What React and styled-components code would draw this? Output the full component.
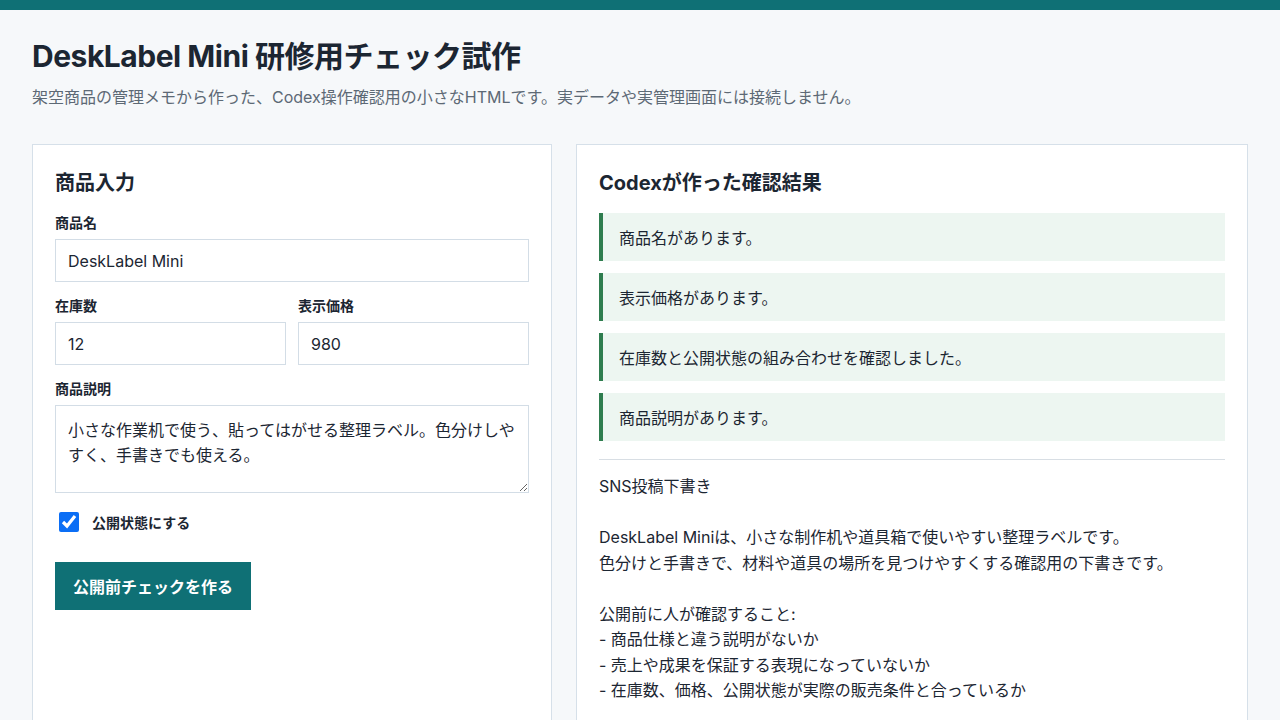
import styled, { createGlobalStyle } from "styled-components"

const draft = `SNS投稿下書き

DeskLabel Miniは、小さな制作机や道具箱で使いやすい整理ラベルです。
色分けと手書きで、材料や道具の場所を見つけやすくする確認用の下書きです。

公開前に人が確認すること:
- 商品仕様と違う説明がないか
- 売上や成果を保証する表現になっていないか
- 在庫数、価格、公開状態が実際の販売条件と合っているか`

const checks = [
  "商品名があります。",
  "表示価格があります。",
  "在庫数と公開状態の組み合わせを確認しました。",
  "商品説明があります。",
]

export default function App() {
  return (
    <>
      <GlobalStyle />
      <TopBar />
      <Page>
        <Title>DeskLabel Mini 研修用チェック試作</Title>
        <Lead>架空商品の管理メモから作った、Codex操作確認用の小さなHTMLです。実データや実管理画面には接続しません。</Lead>

        <Columns>
          <Panel>
            <PanelTitle>商品入力</PanelTitle>

            <Field>
              <Label>商品名</Label>
              <Input defaultValue="DeskLabel Mini" />
            </Field>

            <Row>
              <Field>
                <Label>在庫数</Label>
                <Input defaultValue="12" />
              </Field>
              <Field>
                <Label>表示価格</Label>
                <Input defaultValue="980" />
              </Field>
            </Row>

            <Field>
              <Label>商品説明</Label>
              <TextArea defaultValue="小さな作業机で使う、貼ってはがせる整理ラベル。色分けしやすく、手書きでも使える。" />
            </Field>

            <CheckRow>
              <input type="checkbox" defaultChecked />
              <span>公開状態にする</span>
            </CheckRow>

            <Button>公開前チェックを作る</Button>
          </Panel>

          <Panel>
            <PanelTitle>Codexが作った確認結果</PanelTitle>
            <ResultList>
              {checks.map((c) => (
                <ResultItem key={c}>{c}</ResultItem>
              ))}
            </ResultList>
            <Divider />
            <Draft>{draft}</Draft>
          </Panel>
        </Columns>
      </Page>
    </>
  )
}

const GlobalStyle = createGlobalStyle`
  body {
    margin: 0;
    background: #f6f8fa;
    color: #1c2632;
    font-family: Inter, "Noto Sans CJK JP", sans-serif;
  }
`
const TopBar = styled.div`
  height: 10px;
  background: #0f7075;
`
const Page = styled.main`
  padding: 28px 32px 40px;
`
const Title = styled.h1`
  margin: 0;
  font-size: 30px;
  line-height: 36px;
  font-weight: 700;
  letter-spacing: -0.016em;
`
const Lead = styled.p`
  margin: 12px 0 0;
  font-size: 16px;
  line-height: 22px;
  color: #5d6975;
`
const Columns = styled.div`
  display: grid;
  grid-template-columns: 520px 1fr;
  gap: 24px;
  margin-top: 36px;
`
const Panel = styled.section`
  background: #fff;
  border: 1px solid #d6e0e9;
  padding: 24px 22px 40px;
  min-height: 600px;
`
const PanelTitle = styled.h2`
  margin: 0 0 16px;
  font-size: 20px;
  line-height: 28px;
  font-weight: 700;
`
const Field = styled.div`
  display: flex;
  flex-direction: column;
  gap: 7px;
  margin-bottom: 14px;
  min-width: 0;
`
const Label = styled.label`
  font-size: 14px;
  line-height: 19px;
  font-weight: 700;
`
const Input = styled.input`
  box-sizing: border-box;
  width: 100%;
  height: 43px;
  padding: 0 12px;
  border: 1px solid #d3dde6;
  border-radius: 0;
  font: inherit;
  font-size: 16px;
  color: #1c2632;
  background: #fff;
`
const Row = styled.div`
  display: grid;
  grid-template-columns: 1fr 1fr;
  gap: 12px;
`
const TextArea = styled.textarea`
  box-sizing: border-box;
  width: 100%;
  height: 88px;
  padding: 12px 12px;
  border: 1px solid #d3dde6;
  border-radius: 0;
  font: inherit;
  font-size: 16px;
  line-height: 25px;
  color: #1c2632;
  resize: vertical;
`
const CheckRow = styled.label`
  display: flex;
  align-items: center;
  gap: 13px;
  margin-top: 19px;
  font-size: 14px;
  font-weight: 700;

  input {
    width: 20px;
    height: 20px;
    margin: 0 0 0 4px;
    accent-color: #0b6ef5;
  }
`
const Button = styled.button`
  margin-top: 30px;
  height: 48px;
  padding: 0 18px;
  border: 0;
  background: #0f7075;
  color: #fff;
  font: inherit;
  font-size: 16px;
  font-weight: 700;
`
const ResultList = styled.ul`
  list-style: none;
  margin: 0;
  padding: 0;
  display: flex;
  flex-direction: column;
  gap: 12px;
`
const ResultItem = styled.li`
  height: 48px;
  display: flex;
  align-items: center;
  padding-left: 16px;
  border-left: 4px solid #2f7d4f;
  background: #edf6f1;
  font-size: 16px;
`
const Divider = styled.hr`
  margin: 18px 0 14px;
  border: 0;
  border-top: 1px solid #d8dee4;
`
const Draft = styled.pre`
  margin: 0;
  white-space: pre-wrap;
  font-family: inherit;
  font-size: 16px;
  line-height: 25.5px;
`
